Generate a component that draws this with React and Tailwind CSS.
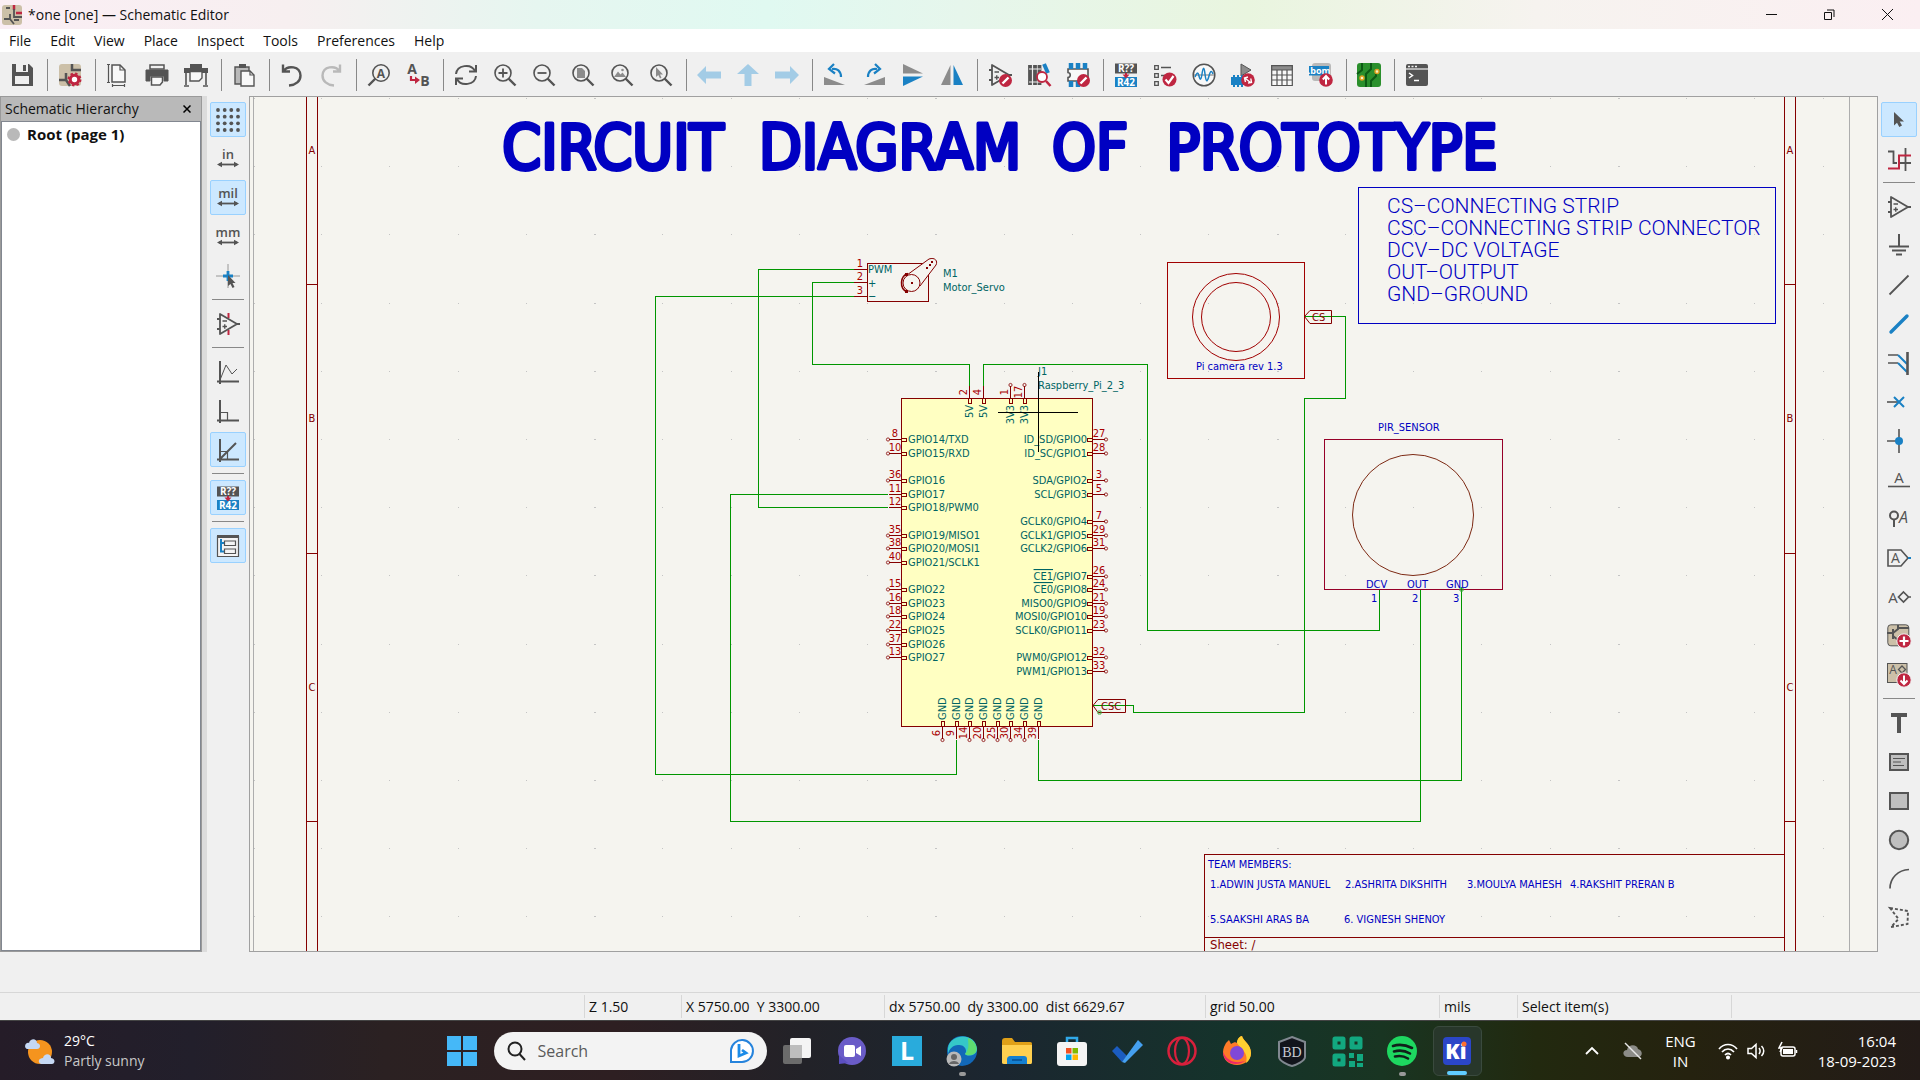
import React from "react";

const G = "#545454";
const B = "#1a81c4";
const R = "#bf2641";

function Ic({ children, className = "size-6 overflow-visible", sw = 2 }) {
  return (
    <svg viewBox="0 0 24 24" className={className} fill="none" stroke={G} strokeWidth={sw} aria-hidden="true">
      {children}
    </svg>
  );
}

function T({ x, y, s, children, fill = G, w = 700, anchor = "middle", i }) {
  return (
    <text x={x} y={y} fontSize={s} fill={fill} stroke="none" fontWeight={w} textAnchor={anchor} fontStyle={i ? "italic" : "normal"} fontFamily='"Open Sans", sans-serif'>
      {children}
    </text>
  );
}

const lens = (
  <>
    <circle cx="10" cy="10" r="8" strokeWidth="1.6" />
    <path d="M15.5 15.5L22.5 22.5" strokeWidth="2.4" />
  </>
);

const opamp = (
  <>
    <path d="M4 2V22L21 12Z" strokeWidth="1.8" strokeLinejoin="round" />
    <path d="M1 7H4M1 17H4M21 12H24" strokeWidth="1.8" />
    <path d="M6.500 9H11M6.500 14.500H11M8.750 12.250V16.750" strokeWidth="1.400" />
  </>
);

const noSign = (
  <>
    <circle cx="17.500" cy="17.500" r="6.500" fill={R} stroke="none" />
    <path d="M14.500 20.500L20.500 14.500" stroke="#fff" strokeWidth="2.400" />
  </>
);

const annotate = (
  <>
    <rect x="1" y="0.500" width="22" height="10" fill={G} stroke="none" />
    <rect x="1" y="14" width="22" height="10" fill={B} stroke="none" />
    <path d="M11 10H13V11.500H15.500L12 15.500L8.500 11.500H11Z" fill={R} stroke="none" />
    <T x={12} y={9} s={10} fill="#fff">R??</T>
    <T x={12} y={22.700} s={10} fill="#fff">R42</T>
  </>
);

const tan = <rect x="1" y="1" width="22" height="22" rx="3" fill="#ccc0a8" stroke="none" />;

const I = {
  Save: (
    <>
      <path d="M2 1H19L23 5V23H2Z" fill={G} stroke="none" />
      <rect x="6" y="1" width="12" height="8" fill="#f0f0f0" stroke="none" />
      <rect x="13" y="2" width="3" height="6" fill={G} stroke="none" />
      <rect x="5" y="13" width="14" height="8" fill="#f0f0f0" stroke="none" />
    </>
  ),
  "Schematic setup": (
    <>
      {tan}
      <path d="M14 1V7H23M1 17H8V10M8 17L12 23" strokeWidth="2.500" />
      <circle cx="16.500" cy="16.500" r="4.200" stroke={R} strokeWidth="3" fill="#fff" />
      <circle cx="16.500" cy="16.500" r="6" stroke={R} strokeWidth="2" strokeDasharray="2.400 2.300" />
    </>
  ),
  "Page settings": (
    <>
      <path d="M6 2H14L19 7V19H6Z" strokeWidth="1.500" fill="#f8f8f8" />
      <path d="M14 2V7H19M2.500 1V20M1 1.500H4M1 19.500H4M6 22.500H19M6.500 21V24M18.500 21V24" strokeWidth="1.200" />
    </>
  ),
  Print: (
    <>
      <path d="M1 7H23V18H19V13H5V18H1Z" fill={G} stroke={G} strokeLinejoin="round" strokeWidth="1" />
      <rect x="5" y="2" width="14" height="4" strokeWidth="1.500" fill="#f0f0f0" />
      <path d="M6.500 14H17.500V19L15 22H6.500Z" strokeWidth="1.500" fill="#f8f8f8" />
    </>
  ),
  Plot: (
    <>
      <rect x="6" y="1" width="12" height="4" fill={G} stroke="none" />
      <rect x="0" y="5" width="24" height="5" fill={G} stroke="none" />
      <path d="M2 10V22M22 10V22M0 23H5M19 23H24" strokeWidth="1.600" />
      <path d="M6 8.500H18V15L15 18H6Z" strokeWidth="1.400" fill="#f8f8f8" />
    </>
  ),
  Paste: (
    <>
      <path d="M3 4H17V21H3Z" fill="#b9b9b9" strokeWidth="1.400" />
      <rect x="7" y="1" width="7" height="4" fill={G} stroke="none" />
      <path d="M9 8H18L22 12V23H9Z" fill="#f8f8f8" strokeWidth="1.400" />
      <path d="M18 8V12H22" strokeWidth="1.200" />
    </>
  ),
  Undo: <path d="M3 1.500V8.500H10M3.500 8C8 2 20 3 20.500 12.500C20.500 18 16 22 9 22.500" strokeWidth="2.400" />,
  Redo: <path d="M21 1.500V8.500H14M20.500 8C16 2 4 3 3.500 12.500C3.500 18 8 22 15 22.500" stroke="#b9b9b9" strokeWidth="2.400" />,
  Find: (
    <>
      <circle cx="14" cy="10" r="8.200" strokeWidth="1.600" />
      <path d="M8.500 15.500L1.500 22.500" strokeWidth="2.400" />
      <T x={14} y={14.500} s={12}>A</T>
    </>
  ),
  "Find and replace": (
    <>
      <T x={6} y={11} s={14}>A</T>
      <T x={19} y={23} s={14}>B</T>
      <path d="M5 13V17H10" stroke={R} strokeWidth="2.200" />
      <path d="M9 13.500L14 17L9 21Z" fill={R} stroke="none" />
    </>
  ),
  Refresh: (
    <>
      <path d="M2 11C3 2 17 0 21 8M22 13C21 22 7 24 3 16" strokeWidth="2" />
      <path d="M22 2V8.500H15M2 22V15.500H9" strokeWidth="2" />
    </>
  ),
  "Zoom in": <>{lens}<path d="M5.500 10H14.500M10 5.500V14.500" strokeWidth="1.800" /></>,
  "Zoom out": <>{lens}<path d="M5.500 10H14.500" strokeWidth="1.800" /></>,
  "Zoom to page": <>{lens}<path d="M6 5H11L14 8V15H6Z" fill="#8c8c8c" stroke="none" /></>,
  "Zoom to objects": <>{lens}<path d="M4 14L8 8.500L10.500 11.500L12.500 9.500L16 14Z" fill="#8c8c8c" stroke="none" /><circle cx="12.500" cy="7" r="1.300" fill="#8c8c8c" stroke="none" /></>,
  "Zoom to selection": <>{lens}<path d="M7 4V14L9.300 12L11 15.500L12.500 14.700L11 11.500H14Z" fill="#8c8c8c" stroke="none" /></>,
  Back: <path d="M0 12L9 3V8.500H24V15.500H9V21Z" fill="#a3cce6" stroke="none" />,
  Up: <path d="M12 1L23 11H15.500V23H8.500V11H1Z" fill="#a3cce6" stroke="none" />,
  Forward: <path d="M24 12L15 3V8.500H0V15.500H15V21Z" fill="#a3cce6" stroke="none" />,
  "Rotate counterclockwise": (
    <>
      <path d="M1 14L22 22H1Z" fill="#8c8c8c" stroke="none" />
      <path d="M9 6C14 5 18 8 18 14" stroke={B} strokeWidth="2.200" />
      <path d="M11 1L6 6L12 10.500" stroke={B} strokeWidth="2.200" />
    </>
  ),
  "Rotate clockwise": (
    <>
      <path d="M23 14L2 22H23Z" fill="#8c8c8c" stroke="none" />
      <path d="M15 6C10 5 6 8 6 14" stroke={B} strokeWidth="2.200" />
      <path d="M13 1L18 6L12 10.500" stroke={B} strokeWidth="2.200" />
    </>
  ),
  "Mirror vertically": (
    <>
      <path d="M2 1L22 10.500H2Z" fill="#8c8c8c" stroke="none" />
      <path d="M2 23L22 13.500H2Z" fill={B} stroke="none" />
    </>
  ),
  "Mirror horizontally": (
    <>
      <path d="M10.500 2L1 22H10.500Z" fill="#8c8c8c" stroke="none" />
      <path d="M13.500 2L23 22H13.500Z" fill={B} stroke="none" />
    </>
  ),
  "Symbol editor": <>{opamp}{noSign}</>,
  "Symbol library": (
    <>
      <path d="M3 2V22M8 2V22M12.500 2V22" strokeWidth="3.800" />
      <path d="M17 1L21 10" stroke={B} strokeWidth="4" />
      <path d="M2 6H14M2 19H14" stroke="#f0f0f0" strokeWidth="1" />
      <circle cx="15" cy="14" r="5" stroke={R} fill="#fff" strokeWidth="1.800" />
      <path d="M19 18L23.500 23" stroke={R} strokeWidth="2.600" />
    </>
  ),
  "Footprint editor": (
    <>
      <path d="M2 6V9.500C5 10 5 14 2 14.500V18H22V6Z" strokeWidth="1.600" fill="#f8f8f8" />
      <path d="M5 0V6M12 0V6M19 0V6M5 18V24M12 18V24" stroke={B} strokeWidth="4.500" />
      {noSign}
    </>
  ),
  Annotate: annotate,
  "Electrical rules checker": (
    <>
      <path d="M1.700 2.700H5.300V6.300H1.700ZM1.700 10.700H5.300V14.300H1.700ZM1.700 18.700H5.300V22.300H1.700Z" strokeWidth="1.300" />
      <path d="M8 4.500H18M8 12.500H12" strokeWidth="1.500" />
      <circle cx="16.500" cy="16.500" r="7" fill={R} stroke="none" />
      <path d="M12.500 16.500L15.500 20L20.500 13" stroke="#fff" strokeWidth="2.200" />
    </>
  ),
  Simulator: (
    <>
      <circle cx="12" cy="12" r="10.800" strokeWidth="1.500" fill="#f8f8f8" />
      <path d="M2 12H22" strokeWidth="0.800" />
      <path d="M3 14C5 9 6 9 7 13S9 18 10 11S12 3 13 11S15 20 17 13S20 9 21 11" stroke={B} strokeWidth="1.500" />
    </>
  ),
  "Assign footprints": (
    <>
      <path d="M10 1V13L20 7Z" fill="#8c8c8c" strokeWidth="1" />
      <path d="M0 14H14V22H0Z" fill={B} stroke="none" />
      <path d="M3 12V24M7 12V24M11 12V24" stroke={B} strokeWidth="2" />
      <circle cx="17" cy="17" r="6.800" fill={R} stroke="none" />
      <path d="M14.500 15.500L19.500 19.500M14.500 19L13.500 15L17 14M19.800 15.500L20.500 19.500L17 20" stroke="#fff" strokeWidth="1.400" />
    </>
  ),
  "Symbol fields table": (
    <>
      <rect x="1.700" y="2.700" width="20.600" height="20" fill="#f8f8f8" stroke="none" />
      <rect x="1" y="2" width="22" height="5" fill="#8c8c8c" stroke="none" />
      <path d="M1.700 2.700H22.300V22.500H1.700ZM1.700 7H22.300M1.700 12H22.300M1.700 17H22.300M7 7V22.500M12 7V22.500M17 7V22.500" strokeWidth="1.200" />
    </>
  ),
  "Bill of materials": (
    <>
      <rect x="3" y="0" width="19" height="18" rx="3" fill="#b9b9b9" stroke="none" />
      <rect x="0" y="3" width="20" height="9.500" fill={B} stroke="none" />
      <T x={10} y={10.800} s={9} fill="#fff">.bom</T>
      <circle cx="17" cy="17" r="6.800" fill={R} stroke="none" />
      <path d="M17 21.500V14M13.800 16.500L17 13L20.200 16.500" stroke="#fff" strokeWidth="2" />
    </>
  ),
  "PCB editor": (
    <>
      <rect x="0" y="0" width="24" height="24" rx="3" fill="#2a8f2c" stroke="none" />
      <path d="M14 0V6L9 11V24M19 8V13L14 18V24M5 0V7L0 11" stroke="#0c5a14" strokeWidth="2" />
      <circle cx="20" cy="8.500" r="2" fill="#f8f4c0" stroke="#e0a020" strokeWidth="1.400" />
      <circle cx="5" cy="15" r="2" fill="#f8f4c0" stroke="#e0a020" strokeWidth="1.400" />
    </>
  ),
  "Scripting console": (
    <>
      <rect x="1" y="1" width="22" height="22" rx="2" fill={G} stroke="none" />
      <path d="M1 6H23" stroke="#f0f0f0" strokeWidth="1.200" />
      <path d="M3 3.500H5M6.500 3.500H8.500M10 3.500H12" stroke="#f0f0f0" strokeWidth="1.500" />
      <path d="M4 10L7.500 12.500L4 15M9 17.500H14" stroke="#fff" strokeWidth="1.500" />
    </>
  ),
  Grid: (
    <g fill={G} stroke="none">
      {[2, 8.7, 15.3, 22].map((y) => [2, 8.7, 15.3, 22].map((x) => <circle key={x + "-" + y} cx={x} cy={y} r="1.900" />))}
    </g>
  ),
  ...Object.fromEntries(
    [["Inches", "in"], ["Mils", "mil"], ["Millimeters", "mm"]].map(([k, t]) => [
      k,
      <g key={k}>
        <T x={12} y={12} s={13} w={600}>{t}</T>
        <path d="M3 17.500H21" strokeWidth="1.800" />
        <path d="M1 17.500L6 14.800V20.200ZM23 17.500L18 14.800V20.200Z" fill={G} stroke="none" />
      </g>,
    ])
  ),
  "Full-window crosshairs": (
    <>
      <path d="M0 12H24M12 0V24" stroke="#8c8c8c" strokeWidth="0.900" />
      <path d="M7 12H17M12 7V17" stroke={B} strokeWidth="2.800" />
      <path d="M12 11V22L14.500 20L16.500 24L18.500 23L16.500 19H19.500Z" fill={G} stroke="none" />
    </>
  ),
  "Hidden pins": <><path d="M12.500 1V6M12.500 18V23" stroke={R} strokeWidth="2" />{opamp}</>,
  "Free angle": (
    <>
      <path d="M4 1V24M1 21.500H23" />
      <path d="M4 20L10 5L16 14L21 9" strokeWidth="1" />
    </>
  ),
  "90 degree": (
    <>
      <path d="M4 1V24M1 21.500H23" />
      <path d="M4 13.500H11.500V21" strokeWidth="1.200" />
    </>
  ),
  "45 degree": (
    <>
      <path d="M4 1V24M1 21.500H23M4 21L20 5" />
      <path d="M4 13.500H11.500V21" strokeWidth="1.200" />
    </>
  ),
  "Automatic annotation": annotate,
  "Hierarchy navigator": (
    <>
      <path d="M1.500 2.500H22.500V22.500H1.500Z" strokeWidth="1.200" fill="#f4f4f4" />
      <path d="M1 2.500H23" strokeWidth="3" />
      <path d="M5 5V17.500H9M5 9H9" stroke={B} strokeWidth="2" />
      <path d="M8.500 7H19.500V11.500H8.500ZM8.500 15H19.500V19.500H8.500Z" strokeWidth="1.200" />
    </>
  ),
  Select: <path d="M7 4V17.500L10 14.800L12.300 19L15 17.500L12.700 13.500H17Z" fill={G} stroke="none" />,
  "Highlight net": (
    <>
      <path d="M1 4.500H6.500V16H10M18.500 1V24M12 16H24" strokeWidth="1.800" />
      <path d="M1 21.500H12V8.500H24" stroke={R} />
    </>
  ),
  "Add symbol": opamp,
  "Add power": <path d="M12 0V12.500M2 12.500H22M5 16.500H19M9 20.500H15" />,
  "Add wire": <path d="M2.500 21.500L21.500 2.500" strokeWidth="1.800" />,
  "Add bus": <path d="M4 20L20 4" stroke={B} strokeWidth="3.400" strokeLinecap="round" />,
  "Wire to bus entry": (
    <>
      <path d="M1 4H11M1 12H11" strokeWidth="1.600" />
      <path d="M11 4L20 13M11 12L20 21" stroke={B} />
      <path d="M20.500 1V24" strokeWidth="2.600" />
    </>
  ),
  "No connect": (
    <>
      <path d="M0 12H12" strokeWidth="1.600" />
      <path d="M7 7L17 17M17 7L7 17" stroke={B} />
    </>
  ),
  Junction: (
    <>
      <path d="M0 12H12M12 0V24" strokeWidth="1.600" />
      <circle cx="12" cy="12" r="4" fill={B} stroke="none" />
    </>
  ),
  "Net label": <><T x={12} y={15} s={15} w={400}>A</T><path d="M1 18.500H23" strokeWidth="1.600" /></>,
  "Net class": <><circle cx="7" cy="8.500" r="4" /><path d="M7 12.500V20" /><T x={16.500} y={16} s={16} w={400} i>A</T></>,
  "Global label": <><path d="M1 4H14L21 12L14 20H1Z" strokeWidth="1.600" /><path d="M21 12H24" stroke={B} /><T x={8.500} y={17} s={14} w={400}>A</T></>,
  "Hierarchical label": <><T x={6} y={17.500} s={15} w={400}>A</T><path d="M16.500 7L21.500 12L16.500 17L11.500 12ZM21.500 12H24" strokeWidth="1.700" /></>,
  "Add sheet": (
    <>
      <rect x="0.800" y="0.800" width="21" height="21" rx="3" fill="#ccc0a8" strokeWidth="1" />
      <path d="M0 9H6M6 5V15M6 9L11 5V1M11 4H22M6 12L11 16" strokeWidth="2" />
      <circle cx="17" cy="17" r="7.200" fill={R} stroke="#f0f0f0" strokeWidth="1" />
      <path d="M12.500 17H21.500M17 12.500V21.500" stroke="#fff" strokeWidth="2.200" />
    </>
  ),
  "Import sheet pin": (
    <>
      <rect x="0.500" y="0.500" width="19.500" height="19" fill="#ccc0a8" strokeWidth="1" />
      <T x={6} y={11} s={12} w={400}>A</T>
      <path d="M15 3L18.500 6.500L15 10L11.500 6.500Z" strokeWidth="1.300" />
      <circle cx="17" cy="17" r="7.200" fill={R} stroke="#f0f0f0" strokeWidth="1" />
      <path d="M17 12.500V20.500M13.500 17.500L17 21L20.500 17.500" stroke="#fff" strokeWidth="2" />
    </>
  ),
  "Add text": <path d="M4 4H20M12 4V22" strokeWidth="4" />,
  "Add text box": <><rect x="3" y="4" width="18" height="16" fill="#bfbfbf" /><path d="M6 8.500H18M6 12H14M6 15.500H17" strokeWidth="1.200" /></>,
  "Add rectangle": <rect x="3" y="4" width="18" height="16" fill="#bfbfbf" />,
  "Add circle": <circle cx="12" cy="12" r="9.200" fill="#bfbfbf" />,
  "Add arc": <path d="M3 21.500C3 11 11 3 22 2.500" strokeWidth="1.700" />,
  "Delete tool": <path d="M3 2L21 5L20.500 18L4 21L11.500 13Z" strokeDasharray="3 2" strokeWidth="1.900" />,
};

const topGroups = [
  ["Save"], ["Schematic setup"], ["Page settings", "Print", "Plot"], ["Paste"], ["Undo", "Redo"], ["Find", "Find and replace"],
  ["Refresh", "Zoom in", "Zoom out", "Zoom to page", "Zoom to objects", "Zoom to selection"],
  ["Back", "Up", "Forward"],
  ["Rotate counterclockwise", "Rotate clockwise", "Mirror vertically", "Mirror horizontally"],
  ["Symbol editor", "Symbol library", "Footprint editor"],
  ["Annotate", "Electrical rules checker", "Simulator", "Assign footprints", "Symbol fields table", "Bill of materials"],
  ["PCB editor"], ["Scripting console"],
];

const leftGroups = [
  ["Grid", "Inches", "Mils", "Millimeters", "Full-window crosshairs"], ["Hidden pins"],
  ["Free angle", "90 degree", "45 degree"], ["Automatic annotation"], ["Hierarchy navigator"],
];

const rightGroups = [
  ["Select", "Highlight net"],
  ["Add symbol", "Add power", "Add wire", "Add bus", "Wire to bus entry", "No connect", "Junction", "Net label", "Net class", "Global label", "Hierarchical label", "Add sheet", "Import sheet pin"],
  ["Add text", "Add text box", "Add rectangle", "Add circle", "Add arc", "Delete tool"],
];

const active = new Set(["Grid", "Mils", "45 degree", "Automatic annotation", "Hierarchy navigator", "Select"]);

function SideBar({ groups, label }) {
  return (
    <div role="toolbar" aria-label={label} className="flex w-[42px] shrink-0 flex-col items-center pt-1">
      {groups.map((g, i) => (
        <React.Fragment key={i}>
          {i > 0 && <div className="my-1 h-px w-8 shrink-0 bg-[#888]" />}
          {g.map((n) => (
            <button
              key={n}
              aria-label={n}
              className={
                active.has(n)
                  ? "my-[2px] flex h-[35px] w-9 shrink-0 items-center justify-center rounded-[2px] border border-[#99d1ff] bg-[#cce8ff]"
                  : "my-[2px] flex h-[35px] w-9 shrink-0 items-center justify-center"
              }
            >
              <Ic>{I[n]}</Ic>
            </button>
          ))}
        </React.Fragment>
      ))}
    </div>
  );
}

const RED = "#840000";
const NUM = "#a90000";
const TEAL = "#006464";
const NET = "#009600";
const BLUE = "#0000c2";
const STROKE_FONT = '"DejaVu Sans Condensed", "DejaVu Sans", sans-serif';

const leftPins = [
  [0, 8, "GPIO14/TXD"], [1, 10, "GPIO15/RXD"], [3, 36, "GPIO16"], [4, 11, "GPIO17", 1], [5, 12, "GPIO18/PWM0", 1],
  [7, 35, "GPIO19/MISO1"], [8, 38, "GPIO20/MOSI1"], [9, 40, "GPIO21/SCLK1"], [11, 15, "GPIO22"], [12, 16, "GPIO23"],
  [13, 18, "GPIO24"], [14, 22, "GPIO25"], [15, 37, "GPIO26"], [16, 13, "GPIO27"],
];
const rightPins = [
  [0, 27, "ID_SD/GPIO0"], [1, 28, "ID_SC/GPIO1"], [3, 3, "SDA/GPIO2"], [4, 5, "SCL/GPIO3"], [6, 7, "GCLK0/GPIO4"],
  [7, 29, "GCLK1/GPIO5"], [8, 31, "GCLK2/GPIO6"], [10, 26, "/GPIO7", "CE1"], [11, 24, "/GPIO8", "CE0"], [12, 21, "MISO0/GPIO9"],
  [13, 19, "MOSI0/GPIO10"], [14, 23, "SCLK0/GPIO11"], [16, 32, "PWM0/GPIO12"], [17, 33, "PWM1/GPIO13"],
];
const bottomPins = [[0, 6], [1, 9, 1], [2, 14], [3, 20], [4, 25], [5, 30], [6, 34], [7, 39, 1]];
const topPins = [[969, 2, "5V", 1], [983, 4, "5V", 1], [1010, 1, "3V3"], [1024, 17, "3V3"]];

const rowY = (k) => Math.round(439 + 13.65 * k);

function Label({ x, y, s = 11, fill = BLUE, anchor, children }) {
  return <text x={x} y={y} fontSize={s} fill={fill} textAnchor={anchor}>{children}</text>;
}

function Up({ x, y, fill, anchor, children }) {
  return <text transform={`translate(${x} ${y}) rotate(-90)`} fontSize="11" fill={fill} textAnchor={anchor}>{children}</text>;
}

function Schematic() {
  const cols = Array.from({ length: 24 }, (_, i) => i - 1);
  const rows = Array.from({ length: 13 }, (_, i) => i);
  return (
    <svg viewBox="250 97 1627 854" preserveAspectRatio="xMidYMid slice" className="block h-full w-full" fontFamily={STROKE_FONT} fill="none">
      <g fill="#c4c4c4">
        {cols.map((c) => rows.map((r) => (
          <rect key={c + "-" + r} x={Math.round(321 + 68.25 * c)} y={Math.round(98 + 68.2 * r)} width={(c + 1) % 5 === 0 ? 2 : 1} height="1" />
        )))}
      </g>
      <g shapeRendering="crispEdges">
        <path d="M253.500 97V951M1849.500 97V951" stroke="#adadad" />
        <path d="M306.500 97V951M317.500 97V951M306 284.500H318M306 553.500H318M306 821.500H318M1784.500 97V951M1795.500 97V951M1784 284.500H1796M1784 553.500H1796M1784 821.500H1796M1204.500 951V854.500H1784.500M1204.500 937.500H1784.500" stroke={RED} />
        <rect x="1358.500" y="187.500" width="417" height="136" stroke={BLUE} />
        <rect x="1167.500" y="262.500" width="137" height="116" stroke="#a00000" />
        <rect x="1324.500" y="439.500" width="178" height="150" stroke="#960028" />
        <rect x="867.500" y="263.500" width="61" height="38" stroke={RED} />
        <path d="M854 269.500H867M854 282.500H867M854 296.500H867" stroke={RED} />
        <rect x="901.500" y="398.500" width="191" height="328" fill="#ffffc2" stroke={RED} />
      </g>

      <circle cx="1236" cy="317" r="43.500" stroke="#a00000" />
      <circle cx="1236" cy="317" r="34.500" stroke="#a00000" />
      <circle cx="1413" cy="515" r="60.500" stroke="#7d2a14" />

      <g stroke={RED}>
        <path d="M908 273.500C900 276 899 288 907 292" strokeWidth="1.500" />
        <path d="M907 275L929 259C935 257 938 261 936 265L920 286" fill="#f5f4ef" />
        <circle cx="911.500" cy="283" r="8.500" fill="#f5f4ef" />
      </g>
      <path d="M911 282h2v2h-2zM926 267h2v2h-2zM929 264h2v2h-2zM931 261h2v2h-2zM905 273h3v3h-3zM905 290h3v3h-3z" fill={RED} />

      <g stroke={NET} shapeRendering="crispEdges">
        <path d="M854 269.500H758.500V507.500H888M854 282.500H812.500V364.500H969.500V386M854 296.500H655.500V774.500H956.500V740M888 494.500H730.500V821.500H1420.500V590M1379.500 590V630.500H1147.500V364.500H983.500V386M1461.500 587V780.500H1038.500V740M1305 316.500H1345.500V398.500H1304.500V712.500H1133.500V705.500H1093" />
      </g>
      <path d="M1304.500 316.500L1310 310.500H1331.500V323.500H1310ZM1093 705.500L1098 699.500H1125.500V712.500H1098Z" stroke={RED} />
      <path d="M1098 711h3v3h-3zM1460 588h3v3h-3z" stroke="#40b040" />
      <Label x={1312} y={321} fill={RED}>CS</Label>
      <Label x={1101} y={710} fill={RED}>CSC</Label>

      <g stroke={RED} shapeRendering="crispEdges">
        {leftPins.map(([k]) => <path key={k} d={`M889 ${rowY(k) + 0.5}H901M901.500 ${rowY(k) - 1 + 0.5}h5v3h-5z`} />)}
        {rightPins.map(([k]) => <path key={k} d={`M1093 ${rowY(k) + 0.5}H1105M1087.500 ${rowY(k) - 1 + 0.5}h5v3h-5z`} />)}
        {bottomPins.map(([k]) => <path key={k} d={`M${Math.round(942 + 13.65 * k) + 0.5} 727V739m-1.500 -12.500v-5h3v5z`} />)}
        {topPins.map(([x]) => <path key={x} d={`M${x + 0.5} 386V398m-1.500 0.500v5h3v-5z`} />)}
      </g>
      <g stroke={RED} strokeWidth="0.800">
        {leftPins.filter((p) => !p[3]).map(([k]) => <circle key={k} cx="888" cy={rowY(k) + 0.5} r="1.600" />)}
        {rightPins.map(([k]) => <circle key={k} cx="1106" cy={rowY(k) + 0.5} r="1.600" />)}
        {bottomPins.filter((p) => !p[2]).map(([k]) => <circle key={k} cx={Math.round(942 + 13.65 * k) + 0.5} cy="740" r="1.600" />)}
        {topPins.filter((p) => !p[3]).map(([x]) => <circle key={x} cx={x + 0.5} cy="385" r="1.600" />)}
      </g>

      {leftPins.map(([k, n, t]) => (
        <g key={n}>
          <Label x={895} y={rowY(k) - 2} fill={NUM} anchor="middle">{n}</Label>
          <Label x={908} y={rowY(k) + 4} fill={TEAL}>{t}</Label>
        </g>
      ))}
      {rightPins.map(([k, n, t, bar]) => (
        <g key={n}>
          <Label x={1099} y={rowY(k) - 2} fill={NUM} anchor="middle">{n}</Label>
          <Label x={1087} y={rowY(k) + 4} fill={TEAL} anchor="end">{bar && <tspan textDecoration="overline">{bar}</tspan>}{t}</Label>
        </g>
      ))}
      {bottomPins.map(([k, n]) => (
        <g key={n}>
          <Up x={Math.round(942 + 13.65 * k) - 2} y={733} fill={NUM} anchor="middle">{n}</Up>
          <Up x={Math.round(942 + 13.65 * k) + 4} y={720} fill={TEAL}>GND</Up>
        </g>
      ))}
      {topPins.map(([x, n, t]) => (
        <g key={n}>
          <Up x={x - 2} y={392} fill={NUM} anchor="middle">{n}</Up>
          <Up x={x + 4} y={405} fill={TEAL} anchor="end">{t}</Up>
        </g>
      ))}

      {[1, 2, 3].map((n, i) => <Label key={n} x={860} y={[267, 280, 294][i]} fill={NUM} anchor="middle">{n}</Label>)}
      <Label x={868} y={273} fill={TEAL}>PWM</Label>
      <Label x={868} y={287} fill={TEAL}>+</Label>
      <Label x={868} y={300} fill={TEAL}>−</Label>
      <Label x={943} y={277} fill={TEAL}>M1</Label>
      <Label x={943} y={291} fill={TEAL}>Motor_Servo</Label>
      <Label x={1038} y={375} fill={TEAL}>J1</Label>
      <Label x={1038} y={389} fill={TEAL}>Raspberry_Pi_2_3</Label>

      <Label x={1196} y={370}>Pi camera rev 1.3</Label>
      <Label x={1378} y={431}>PIR_SENSOR</Label>
      <Label x={1366} y={588}>DCV</Label>
      <Label x={1407} y={588}>OUT</Label>
      <Label x={1446} y={588}>GND</Label>
      <Label x={1371} y={602}>1</Label>
      <Label x={1412} y={602}>2</Label>
      <Label x={1453} y={602}>3</Label>

      {["A", "B", "C"].map((c, i) => (
        <g key={c}>
          <Label x={312} y={[154, 422, 691][i]} fill={RED} anchor="middle">{c}</Label>
          <Label x={1790} y={[154, 422, 691][i]} fill={RED} anchor="middle">{c}</Label>
        </g>
      ))}

      <g fontSize="62" fill={BLUE} stroke={BLUE} strokeWidth="4" strokeLinejoin="round" textAnchor="middle">
        <text x="613" y="169">CIRCUIT</text>
        <text x="890" y="169">DIAGRAM</text>
        <text x="1090" y="169">OF</text>
        <text x="1332" y="169">PROTOTYPE</text>
      </g>

      <g fontSize="21" fill={BLUE} fontWeight="300" fontFamily="Roboto, sans-serif">
        <text x="1387" y="213">CS–CONNECTING STRIP</text>
        <text x="1387" y="235">CSC–CONNECTING STRIP CONNECTOR</text>
        <text x="1387" y="257">DCV–DC VOLTAGE</text>
        <text x="1387" y="279">OUT–OUTPUT</text>
        <text x="1387" y="301">GND–GROUND</text>
      </g>

      <Label x={1208} y={868}>TEAM MEMBERS:</Label>
      <Label x={1210} y={888}>1.ADWIN JUSTA MANUEL</Label>
      <Label x={1345} y={888}>2.ASHRITA DIKSHITH</Label>
      <Label x={1467} y={888}>3.MOULYA MAHESH</Label>
      <Label x={1570} y={888}>4.RAKSHIT PRERAN B</Label>
      <Label x={1210} y={923}>5.SAAKSHI ARAS BA</Label>
      <Label x={1344} y={923}>6. VIGNESH SHENOY</Label>
      <Label x={1210} y={949} s={13} fill={RED}>Sheet: /</Label>

      <path d="M998 412.500H1078M1038.500 372V452" stroke="#000" shapeRendering="crispEdges" />
    </svg>
  );
}

function App32({ children }) {
  return <svg viewBox="0 0 32 32" className="size-8" aria-hidden="true">{children}</svg>;
}

const apps = [
  ["Task view", <><rect x="2" y="10" width="19" height="19" rx="2" fill="#6b6b6b" /><rect x="9" y="3" width="21" height="20" rx="2" fill="#f4f4f4" /><rect x="9" y="10" width="12" height="13" fill="#bdbdbd" /></>],
  ["Chat", <><circle cx="16" cy="16" r="14" fill="#6a5cc8" /><path d="M3 20V29L12 28Z" fill="#5b4fc0" /><rect x="8" y="10" width="11" height="12" rx="2" fill="#fff" /><path d="M20 14L25 11V21L20 18Z" fill="#fff" /></>],
  ["L app", <><rect x="1" y="1" width="30" height="30" fill="#29abdc" /><text x="16" y="25" fontSize="25" fontWeight="700" fill="#fff" textAnchor="middle" fontFamily="Open Sans, sans-serif">L</text></>],
  ["Edge", <><circle cx="16" cy="16" r="15" fill="#1268b8" /><path d="M2 13C4 -2 30 -3 31 14C31 21 21 22 19 19C22 15 18 9 12 10C7 10 3 14 2 19Z" fill="#35c8c8" /><path d="M22 3C29 6 32 12 30 17C27 21 21 21 19 19C24 14 22 8 22 3Z" fill="#5fdc70" /><circle cx="8" cy="24" r="7.500" fill="#b9b9b9" /><circle cx="8" cy="22" r="3" fill="#666" /><path d="M3 29C4 25 12 25 13 29Z" fill="#666" /></>, "dot"],
  ["File Explorer", <><path d="M1 6C1 4 2 3 4 3H11L14 7H29C31 7 31 8 31 10V26H1Z" fill="#e0a018" /><path d="M1 10H31V27C31 29 30 29 29 29H3C1 29 1 28 1 27Z" fill="#ffd050" /><path d="M6 29V24C6 22 8 21 9 21H23C25 21 26 22 26 24V29Z" fill="#1580d0" /><path d="M11 25H21" stroke="#0a5aa0" strokeWidth="2" /></>],
  ["Microsoft Store", <><path d="M11 8V3H21V8" fill="none" stroke="#30a8e8" strokeWidth="2.500" /><rect x="1" y="7" width="30" height="24" rx="3" fill="#f4f4f4" /><path d="M10 13H15.500V18.500H10Z" fill="#f25022" /><path d="M16.500 13H22V18.500H16.500Z" fill="#7fba00" /><path d="M10 19.500H15.500V25H10Z" fill="#00a4ef" /><path d="M16.500 19.500H22V25H16.500Z" fill="#ffb900" /></>],
  ["To Do", <><path d="M1 16L6 11L16 21L11 27Z" fill="#1b5cc0" /><path d="M11 27L27 5L32 10L14 28Z" fill="#45a0f0" /></>],
  ["Opera", <><circle cx="16" cy="16" r="13.500" fill="none" stroke="#d8203c" strokeWidth="2.500" /><ellipse cx="16" cy="16" rx="7" ry="13" fill="none" stroke="#d8203c" strokeWidth="2.200" /></>],
  ["Firefox", <><path d="M5 8L8 5L10 9C13 7 15 7 16 8C16 4 19 1 21 1C22 6 30 9 30 18C30 25 24 30 16 30S2 25 2 17C2 13 4 10 5 8Z" fill="#ff7a28" /><path d="M21 1C22 6 30 9 30 18C30 22 28 26 25 28C28 18 20 14 16 8C16 4 19 1 21 1Z" fill="#ffd030" /><circle cx="16" cy="18" r="7" fill="#8048d8" /><path d="M2 17C6 26 14 29 24 26C14 33 2 27 2 17Z" fill="#f02868" /></>],
  ["BD", <><path d="M16 2L29 7V22C29 26 20 30 16 31C12 30 3 26 3 22V7Z" fill="#12151c" stroke="#808890" strokeWidth="2" /><text x="16" y="22" fontSize="14" fill="#c8ccd4" textAnchor="middle" fontFamily="Liberation Serif, serif">BD</text></>],
  ["QR", <><path d="M4 4H12V12H4ZM21 4H29V12H21ZM4 21H12V29H4Z" fill="none" stroke="#12a880" strokeWidth="5" strokeLinejoin="round" /><path d="M18 18H23V23H18ZM26 19H32V26H26ZM18 26H24V32H18ZM26 28H32V32H26Z" fill="#12a880" /></>],
  ["Spotify", <><circle cx="16" cy="16" r="15" fill="#1ed760" /><path d="M7 11C13 9 20 10 26 13M8 16.500C13 15 19 15.500 24 18.500M9 21.500C13 20.500 18 21 22 23.500" fill="none" stroke="#10201a" strokeWidth="2.600" strokeLinecap="round" /></>, "dot"],
  ["KiCad", <><rect x="2" y="2" width="28" height="28" rx="4" fill="#2b46c8" /><text x="15" y="24" fontSize="21" fontWeight="800" fill="#fff" textAnchor="middle" fontFamily="Open Sans, sans-serif">Ki</text><circle cx="23" cy="9" r="2.500" fill="#ff7030" /></>, "on"],
];

const statusCells = ["", "Z 1.50", "X 5750.00  Y 3300.00", "dx 5750.00  dy 3300.00  dist 6629.67", "grid 50.00", "mils", "Select item(s)", ""];

export default function App() {
  return (
    <div className="flex h-screen w-full flex-col overflow-hidden bg-[#f0f0f0] font-['Open_Sans',sans-serif] text-sm text-[#111]">
      <header className="flex h-[29px] shrink-0 items-center bg-[linear-gradient(90deg,#faeef4_0%,#f7eff0_15%,#e6f6f0_28%,#e0f9f1_40%,#e6f6ec_50%,#e9f5df_65%,#f6f3ef_80%,#fbeff2_100%)] pl-[2px]">
        <svg viewBox="0 0 20 20" className="size-5" aria-hidden="true">
          <rect width="20" height="20" rx="3" fill="#ccc0a8" />
          <path d="M12 0V5M14 8H20" stroke={R} strokeWidth="2.500" />
          <path d="M12 4V12H20M2 14H8V9M8 14L12 19M12 15H17M4 3H8" stroke={G} strokeWidth="1.800" fill="none" />
        </svg>
        <h1 className="ml-[6px] flex-1 text-sm">*one [one] — Schematic Editor</h1>
        {[["Minimize", "M0 5.500H11"], ["Restore", "M0.500 3.500H7.500V10.500H0.500ZM3 1H10V8"], ["Close", "M0 0L11 11M11 0L0 11"]].map(([n, d]) => (
          <button key={n} aria-label={n} className="flex h-full w-[58px] items-center justify-center">
            <svg viewBox="0 0 11 11" className="size-[11px] overflow-visible" fill="none" stroke="#111"><path d={d} /></svg>
          </button>
        ))}
        <span className="w-1" />
      </header>
      <nav className="flex h-[23px] shrink-0 items-center gap-[19px] bg-white pl-[9px]">
        {["File", "Edit", "View", "Place", "Inspect", "Tools", "Preferences", "Help"].map((m) => <button key={m}>{m}</button>)}
      </nav>
      <div role="toolbar" aria-label="Main toolbar" className="flex h-[44px] shrink-0 items-center pl-[2px] pt-[2px]">
        {topGroups.map((g, i) => (
          <React.Fragment key={i}>
            {i > 0 && <div className="ml-[6px] mr-[2px] h-8 w-px bg-[#888]" />}
            {g.map((n) => (
              <button key={n} aria-label={n} className="flex h-[35px] w-[39px] items-center justify-center"><Ic>{I[n]}</Ic></button>
            ))}
          </React.Fragment>
        ))}
      </div>

      <main className="flex min-h-0 flex-1">
        <aside className="flex w-[202px] shrink-0 flex-col border border-[#9a9a9a] bg-[#b9b9b9]">
          <div className="flex h-6 shrink-0 items-center justify-between pl-1 pr-[10px]">
            <h2>Schematic Hierarchy</h2>
            <button aria-label="Close panel">
              <svg viewBox="0 0 8 8" className="size-2" stroke="#000" strokeWidth="1.500"><path d="M0.500 0.500L7.500 7.500M7.500 0.500L0.500 7.500" /></svg>
            </button>
          </div>
          <div className="flex-1 border border-[#828790] bg-white">
            <div className="flex items-center pl-[5px] pt-[2px] text-[15px] font-bold">
              <span className="mr-[7px] size-[13px] rounded-full bg-[#b9b9b9]" />
              Root (page 1)
            </div>
          </div>
        </aside>
        <div className="w-[5px] shrink-0 bg-[#dcdcdc]" />
        <SideBar groups={leftGroups} label="Options" />
        <section className="min-w-0 flex-1 border border-[#a0a0a0] bg-[#f5f4ef]"><Schematic /></section>
        <SideBar groups={rightGroups} label="Tools" />
      </main>

      <div className="h-[40px] shrink-0" />
      <footer className="grid h-[28px] shrink-0 grid-cols-[584fr_97fr_203fr_321fr_234fr_78fr_214fr_189fr] items-stretch border-t border-[#d7d7d7] py-[2px]">
        {statusCells.map((t, i) => (
          <div key={i} className={i ? "flex min-w-0 items-center whitespace-pre border-l border-[#d7d7d7] pl-1" : ""}>{t}</div>
        ))}
      </footer>

      <div className="grid h-[60px] shrink-0 grid-cols-[1fr_auto_1fr] items-center border-t border-[#444] bg-[linear-gradient(90deg,#251c28_0%,#221f2b_10%,#2b2122_20%,#2e1f22_32%,#222228_42%,#1b2630_52%,#15332b_64%,#193522_72%,#22290f_80%,#25220f_88%,#231b18_100%)] text-white">
        <div className="flex items-center pl-6">
          <svg viewBox="0 0 32 32" className="size-8" aria-hidden="true">
            <circle cx="16" cy="17" r="12" fill="#f5941e" />
            <path d="M3 14C-1 12 2 7 5 8C6 3 13 3 13 8C18 9 16 14 13 14Z" fill="#c5d8f4" />
            <path d="M17 29C13 27 15 23 19 23C20 18 27 18 27 23C32 24 31 29 28 29Z" fill="#c5d8f4" />
          </svg>
          <div className="ml-2 leading-5"><div>29°C</div><div className="text-[#c8c8c8]">Partly sunny</div></div>
        </div>
        <div className="flex items-center pl-[11px]">
          <button aria-label="Start">
            <svg viewBox="0 0 30 30" className="size-[30px]"><path d="M0 0H14V14H0ZM16 0H30V14H16ZM0 16H14V30H0ZM16 16H30V30H16Z" fill="#45b8f8" /></svg>
          </button>
          <label className="ml-[17px] mr-[3px] flex h-[38px] w-[273px] items-center rounded-full bg-[#f3f3f3] px-3">
            <svg viewBox="0 0 20 20" className="size-5" fill="none" stroke="#222" strokeWidth="2"><circle cx="9" cy="8" r="6.500" /><path d="M13.500 13L19 19" /></svg>
            <input aria-label="Search" placeholder="Search" className="ml-3 min-w-0 flex-1 bg-transparent text-base text-black outline-none placeholder:text-[#5a5a5a]" />
            <svg viewBox="0 0 26 26" className="size-[26px]" fill="none"><path d="M2 24V12A11 11 0 1 1 13 24Z" stroke="#2583dc" strokeWidth="2" fill="#fff" /><path d="M10 6V18L17 15L13 12" stroke="#1c8ce8" strokeWidth="2.800" /></svg>
          </label>
          {apps.map(([n, art, st]) => (
            <button key={n} aria-label={n} className={st === "on" ? "relative mx-[3px] flex h-[50px] w-[49px] items-center justify-center rounded-md border border-[#3a4a3e] bg-[#28372b]" : "relative mx-[3px] flex h-[50px] w-[49px] items-center justify-center"}>
              <App32>{art}</App32>
              {st === "dot" && <span className="absolute bottom-0 h-1 w-[7px] rounded-full bg-[#999]" />}
              {st === "on" && <span className="absolute bottom-0 h-1 w-5 rounded-full bg-[#60cdff]" />}
            </button>
          ))}
        </div>
        <div className="flex items-center justify-end pr-6">
          <svg viewBox="0 0 14 14" className="mr-[24px] size-[14px]" fill="none" stroke="#fff" strokeWidth="1.800"><path d="M1 10L7 4L13 10" /></svg>
          <svg viewBox="0 0 20 20" className="mr-[22px] size-5"><path d="M5 16C-1 16 -1 9 4 9C5 3 14 3 15 8C20 9 20 16 15 16Z" fill="#8c8c88" /><path d="M2 2L18 18" stroke="#e8e8e8" strokeWidth="1.500" /></svg>
          <div className="mr-[22px] text-center text-[15px] leading-5">ENG<br />IN</div>
          <svg viewBox="0 0 20 20" className="mr-[9px] size-5" fill="none" stroke="#fff" strokeWidth="1.700"><path d="M1 8C6 2 14 2 19 8M4 11C7.500 7 12.500 7 16 11M7 14C9 12 11 12 13 14" /><circle cx="10" cy="16.500" r="1.200" fill="#fff" /></svg>
          <svg viewBox="0 0 20 20" className="mr-[11px] size-5" fill="none" stroke="#fff" strokeWidth="1.500"><path d="M1 7.500H4.500L9 3.500V16.500L4.500 12.500H1ZM12 7C13.500 9 13.500 11 12 13M14.500 5C17.500 8 17.500 12 14.500 15" /></svg>
          <svg viewBox="0 0 20 20" className="mr-5 size-5" fill="none" stroke="#fff" strokeWidth="1.500"><rect x="3" y="6" width="14" height="9" rx="2" /><path d="M18.500 9V12" /><rect x="5" y="8" width="10" height="5" fill="#fff" stroke="none" /><path d="M4 1L1 7H4L2 11" strokeWidth="1.600" /></svg>
          <div className="text-right text-[15px] leading-5">16:04<br />18-09-2023</div>
        </div>
      </div>
    </div>
  );
}
